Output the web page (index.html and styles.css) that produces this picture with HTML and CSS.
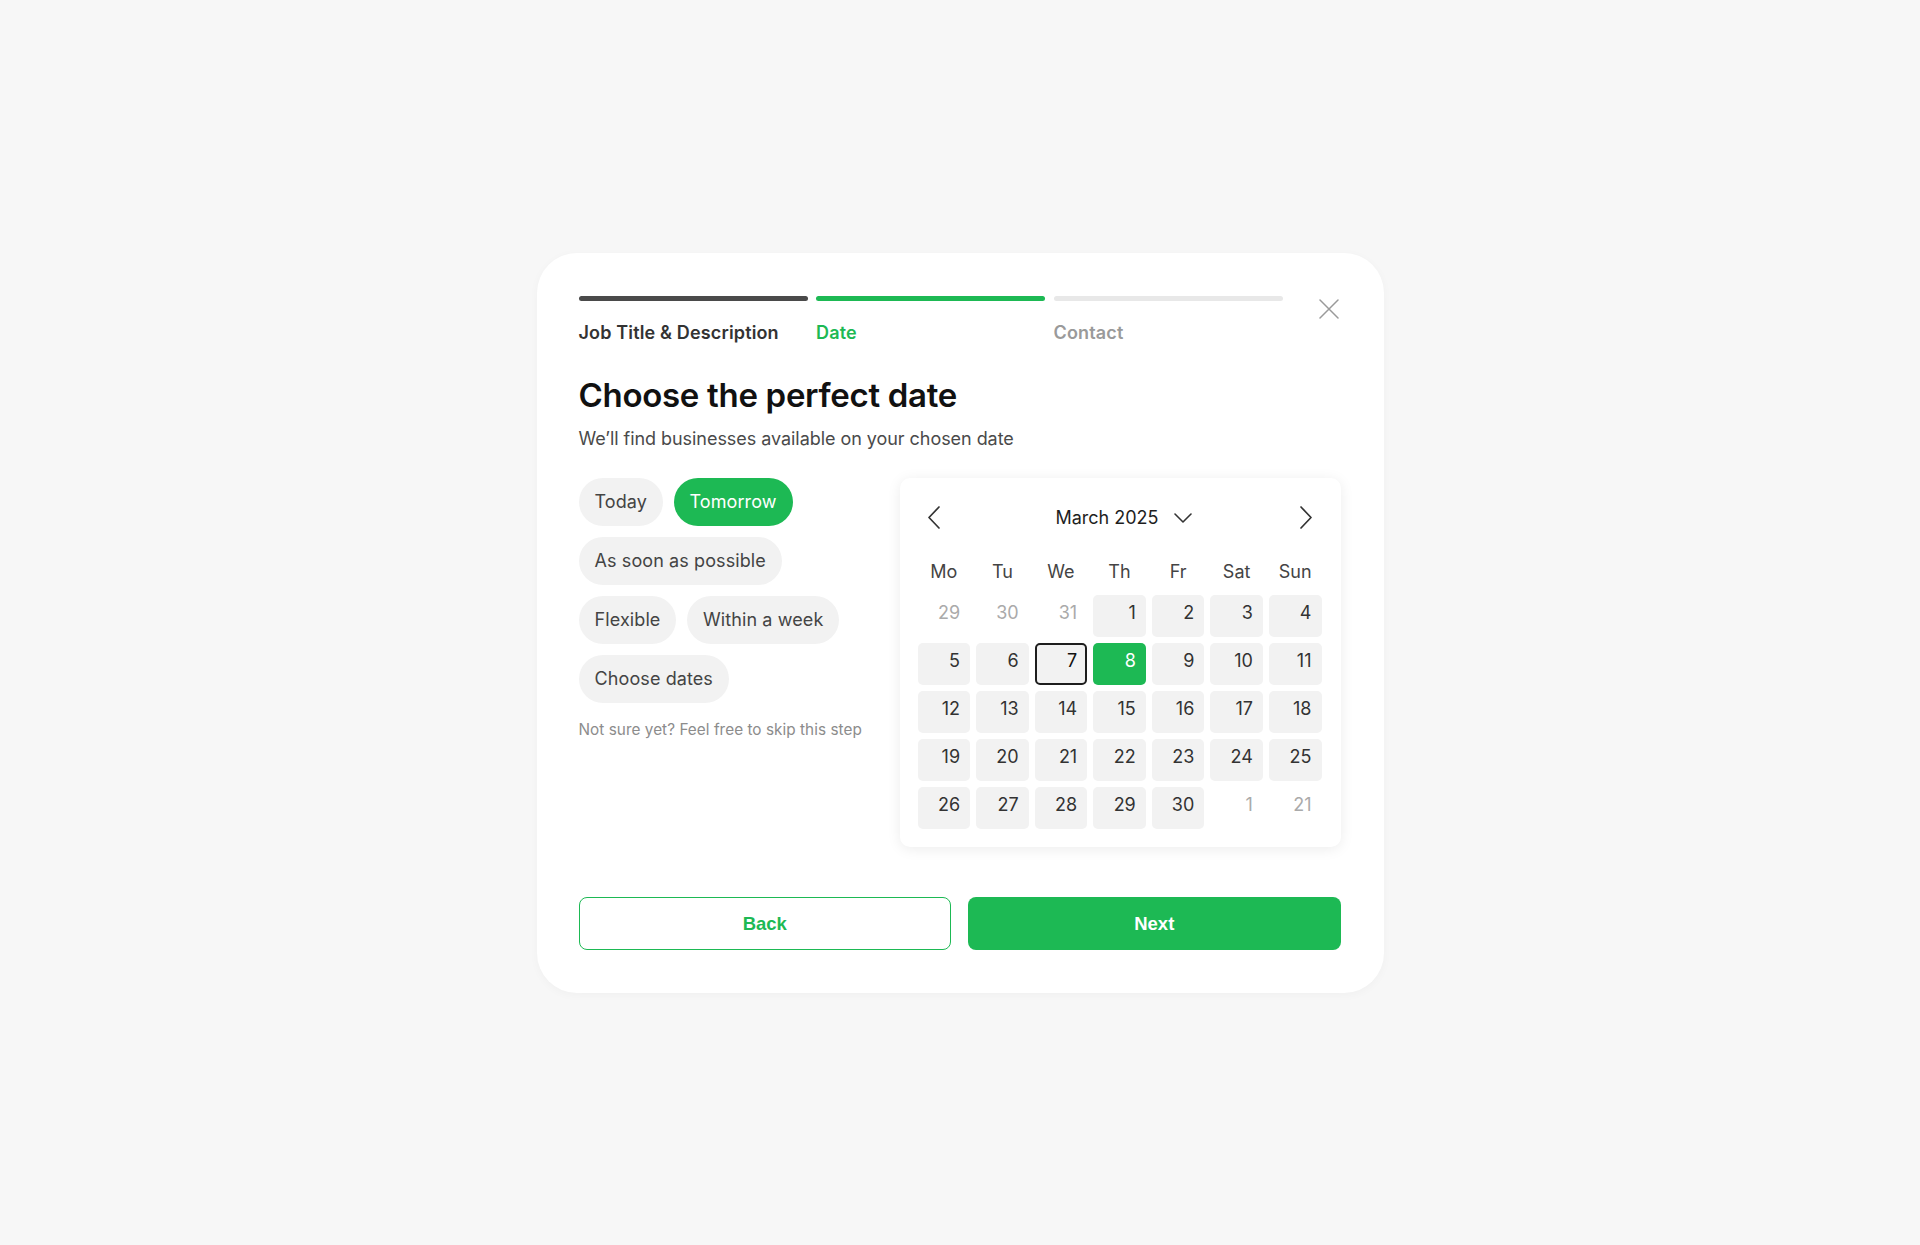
FILE: index.html
```html
<!DOCTYPE html>
<html lang="en">
<head>
<meta charset="utf-8">
<title>Choose the perfect date</title>
<link rel="stylesheet" href="styles.css">
</head>
<body>
<main class="page">
  <section class="modal">
    <header class="modal-head">
      <ol class="steps">
        <li class="step step--done"><span class="step-bar"></span><span class="step-label">Job Title &amp; Description</span></li>
        <li class="step step--current"><span class="step-bar"></span><span class="step-label">Date</span></li>
        <li class="step step--todo"><span class="step-bar"></span><span class="step-label">Contact</span></li>
      </ol>
      <button class="close" aria-label="Close">
        <svg width="20" height="20" viewBox="0 0 20 20"><path d="M1 1 L19 19 M19 1 L1 19" stroke="#9a9a9a" stroke-width="1.5" fill="none" stroke-linecap="round"/></svg>
      </button>
    </header>

    <h1 class="title">Choose the perfect date</h1>
    <p class="subtitle">We’ll find businesses available on your chosen date</p>

    <div class="body">
      <div class="options">
        <div class="chips">
          <button class="chip">Today</button>
          <button class="chip chip--active">Tomorrow</button>
          <button class="chip">As soon as possible</button>
          <button class="chip">Flexible</button>
          <button class="chip">Within a week</button>
          <button class="chip">Choose dates</button>
        </div>
        <p class="hint">Not sure yet? Feel free to skip this step</p>
      </div>

      <div class="calendar">
        <div class="cal-head">
          <button class="cal-nav" aria-label="Previous month">
            <svg width="12" height="23" viewBox="0 0 12 23"><polyline points="11,1 1,11.5 11,22" stroke="#333" stroke-width="1.7" fill="none" stroke-linecap="round" stroke-linejoin="round"/></svg>
          </button>
          <div class="cal-month">
            <span>March 2025</span>
            <svg width="18" height="10" viewBox="0 0 18 10"><polyline points="1,1 9,9 17,1" stroke="#333" stroke-width="1.6" fill="none" stroke-linecap="round" stroke-linejoin="round"/></svg>
          </div>
          <button class="cal-nav" aria-label="Next month">
            <svg width="12" height="23" viewBox="0 0 12 23"><polyline points="1,1 11,11.5 1,22" stroke="#333" stroke-width="1.7" fill="none" stroke-linecap="round" stroke-linejoin="round"/></svg>
          </button>
        </div>
        <div class="weekdays">
          <span>Mo</span><span>Tu</span><span>We</span><span>Th</span><span>Fr</span><span>Sat</span><span>Sun</span>
        </div>
        <div class="days">
          <span class="day day--muted">29</span>
          <span class="day day--muted">30</span>
          <span class="day day--muted">31</span>
          <span class="day">1</span>
          <span class="day">2</span>
          <span class="day">3</span>
          <span class="day">4</span>
          <span class="day">5</span>
          <span class="day">6</span>
          <span class="day day--today">7</span>
          <span class="day day--selected">8</span>
          <span class="day">9</span>
          <span class="day">10</span>
          <span class="day">11</span>
          <span class="day">12</span>
          <span class="day">13</span>
          <span class="day">14</span>
          <span class="day">15</span>
          <span class="day">16</span>
          <span class="day">17</span>
          <span class="day">18</span>
          <span class="day">19</span>
          <span class="day">20</span>
          <span class="day">21</span>
          <span class="day">22</span>
          <span class="day">23</span>
          <span class="day">24</span>
          <span class="day">25</span>
          <span class="day">26</span>
          <span class="day">27</span>
          <span class="day">28</span>
          <span class="day">29</span>
          <span class="day">30</span>
          <span class="day day--muted">1</span>
          <span class="day day--muted">21</span>
        </div>
      </div>
    </div>

    <div class="actions">
      <button class="btn btn--ghost">Back</button>
      <button class="btn btn--primary">Next</button>
    </div>
  </section>
</main>
</body>
</html>
```

FILE: styles.css
```css
* { box-sizing: border-box; }

html, body {
  margin: 0;
  padding: 0;
}

body {
  background: #f7f7f7;
  font-family: Inter, "Noto Sans", "Liberation Sans", sans-serif;
  color: #222;
}

button {
  font-family: inherit;
  cursor: pointer;
}

.page {
  min-height: 100vh;
  display: flex;
  align-items: center;
  justify-content: center;
}

.modal {
  width: 847px;
  padding: 43px 43px 43px 42px;
  background: #fff;
  border-radius: 40px;
  box-shadow: 0 2px 10px rgba(0, 0, 0, 0.03);
}

/* header / steps */
.modal-head {
  display: flex;
  align-items: flex-start;
}

.steps {
  flex: 1;
  display: flex;
  gap: 8.5px;
  margin: 0;
  padding: 0;
  list-style: none;
}

.step {
  flex: 1;
  display: flex;
  flex-direction: column;
}

.step-bar {
  display: block;
  height: 5px;
  border-radius: 3px;
  background: #e8e8e8;
}

.step-label {
  margin-top: 21px;
  font-size: 18px;
  line-height: 22px;
  font-weight: 600;
  letter-spacing: 0.15px;
  color: #9a9a9a;
}

.step--done .step-bar { background: #4a4a4a; }
.step--done .step-label { color: #333; }
.step--current .step-bar { background: #1db954; }
.step--current .step-label { color: #1db954; }

.close {
  width: 24px;
  height: 24px;
  margin-left: 34px;
  margin-top: 1px;
  padding: 0;
  border: none;
  background: none;
  display: flex;
  align-items: center;
  justify-content: center;
}

/* titles */
.title {
  margin: 31px 0 0;
  font-size: 33px;
  line-height: 40px;
  font-weight: 600;
  letter-spacing: -0.3px;
  color: #111;
}

.subtitle {
  margin: 12px 0 0;
  font-size: 18px;
  line-height: 24px;
  color: #4a4a4a;
  letter-spacing: -0.05px;
}

/* body */
.body {
  margin-top: 27px;
  display: grid;
  grid-template-columns: 1fr 441px;
  column-gap: 32px;
  align-items: start;
}

.chips {
  display: flex;
  flex-wrap: wrap;
  gap: 11px 10.5px;
}

.chip {
  height: 48px;
  padding: 0 16px;
  border: none;
  border-radius: 24px;
  background: #f2f2f2;
  color: #444;
  font-size: 18px;
  letter-spacing: 0.1px;
}

.chip--active {
  background: #1db954;
  color: #fff;
}

.hint {
  margin: 17px 0 0;
  font-size: 15.3px;
  line-height: 20px;
  color: #8c8c8c;
  letter-spacing: 0.05px;
  white-space: nowrap;
}

/* calendar */
.calendar {
  width: 441px;
  padding: 20px 19px 18px 18px;
  background: #fff;
  border-radius: 10px;
  box-shadow: 0 2px 14px rgba(0, 0, 0, 0.08);
}

.cal-head {
  height: 40px;
  display: flex;
  align-items: center;
  justify-content: space-between;
}

.cal-nav {
  width: 32px;
  height: 40px;
  padding: 0;
  border: none;
  background: none;
  display: flex;
  align-items: center;
  justify-content: center;
}

.cal-month {
  display: flex;
  align-items: center;
  gap: 15px;
  margin-left: 8px;
  font-size: 18px;
  color: #1e1e1e;
}

.weekdays {
  margin-top: 22px;
  display: grid;
  grid-template-columns: repeat(7, 1fr);
  column-gap: 6px;
  height: 24px;
  line-height: 24px;
  text-align: center;
  font-size: 18px;
  color: #444;
}

.days {
  margin-top: 11px;
  display: grid;
  grid-template-columns: repeat(7, 1fr);
  grid-auto-rows: 42px;
  gap: 6px;
}

.day {
  display: block;
  height: 42px;
  padding-right: 10px;
  border-radius: 5px;
  background: #f2f2f2;
  text-align: right;
  font-size: 18px;
  line-height: 35px;
  color: #333;
}

.day--muted {
  background: transparent;
  color: #aaa;
}

.day--today {
  border: 2px solid #1e1e1e;
  line-height: 31px;
  padding-right: 8px;
  color: #111;
}

.day--selected {
  background: #1db954;
  color: #fff;
}

/* actions */
.actions {
  margin-top: 50px;
  display: grid;
  grid-template-columns: 1fr 1fr;
  column-gap: 17px;
}

.btn {
  height: 53px;
  padding-top: 3px;
  border-radius: 8px;
  font-family: "Liberation Sans", Arial, sans-serif;
  font-size: 18.5px;
  font-weight: 700;
}

.btn--ghost {
  background: #fff;
  border: 1.5px solid #1db954;
  color: #1db954;
}

.btn--primary {
  background: #1db954;
  border: none;
  color: #fff;
}
```
